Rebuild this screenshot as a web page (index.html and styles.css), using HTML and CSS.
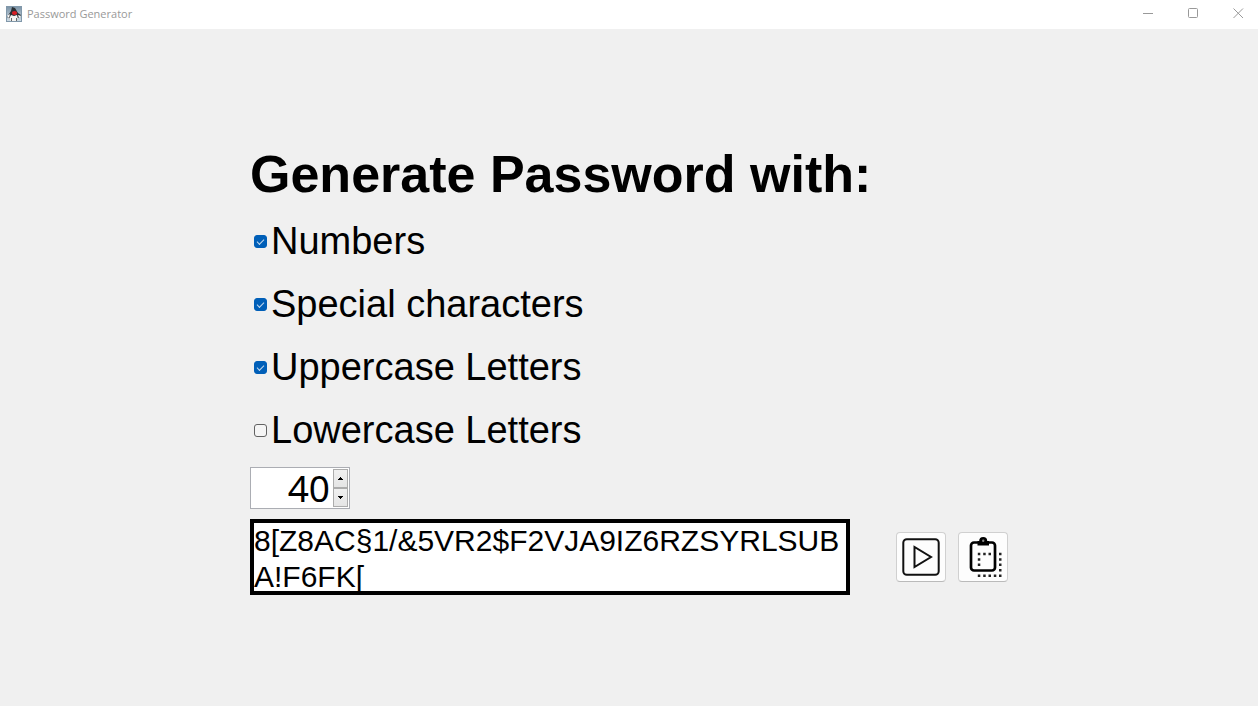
FILE: index.html
```html
<!DOCTYPE html>
<html lang="en">
<head>
<meta charset="utf-8">
<title>Password Generator</title>
<link rel="stylesheet" href="styles.css">
</head>
<body>
<header class="titlebar">
  <svg class="app-icon" width="16" height="16" viewBox="0 0 16 16" aria-hidden="true">
    <defs><linearGradient id="sky" x1="0" y1="0" x2="0" y2="1"><stop offset="0" stop-color="#7890a4"/><stop offset="1" stop-color="#d3dfe8"/></linearGradient></defs>
    <rect width="16" height="16" fill="url(#sky)"/>
    <rect x=".5" y=".5" width="15" height="15" fill="none" stroke="#8198aa"/>
    <path d="M6 1l3 1 3 5 3 2-1 2-2 1-1 2H4l-1-2-2-1 2-3 2-3z" fill="#2b3034"/>
    <path d="M5 9l3 1 3-1 1 4-2 2H5l-2-2z" fill="#f4f4f2"/>
    <path d="M1 10l3-2-1 4zM12 9l3 1-2 2z" fill="#fff"/>
    <ellipse cx="8.500" cy="7" rx="2.600" ry="1.900" fill="#d81e24"/>
    <path d="M5 12h1v3H5zM10 12h1v3h-1z" fill="#666"/>
  </svg>
  <span class="title">Password Generator</span>
  <div class="window-buttons">
    <button type="button" class="window-button" aria-label="Minimize"><svg width="11" height="11" viewBox="0 0 11 11"><path d="M0 5.5h10"/></svg></button>
    <button type="button" class="window-button" aria-label="Maximize"><svg width="11" height="11" viewBox="0 0 11 11"><rect x=".5" y=".5" width="9" height="9" rx="1"/></svg></button>
    <button type="button" class="window-button" aria-label="Close"><svg width="11" height="11" viewBox="0 0 11 11"><path d="M.5 .5l9.500 9.500M10 .5l-9.500 9.500"/></svg></button>
  </div>
</header>
<main class="content">
  <form class="generator">
    <h1 class="heading">Generate Password with:</h1>
    <div class="options">
      <label class="option"><input class="check" type="checkbox" checked>Numbers</label>
      <label class="option"><input class="check" type="checkbox" checked>Special characters</label>
      <label class="option"><input class="check" type="checkbox" checked>Uppercase Letters</label>
      <label class="option"><input class="check" type="checkbox">Lowercase Letters</label>
    </div>
    <div class="spinner">
      <input class="length" type="text" inputmode="numeric" value="40" aria-label="Password length">
      <div class="steps">
        <button type="button" class="step" aria-label="Increase"><svg width="5" height="3" viewBox="0 0 5 3" shape-rendering="crispEdges"><path d="M2 0h1v1h1v1h1v1H0V2h1V1h1z"/></svg></button>
        <button type="button" class="step" aria-label="Decrease"><svg width="5" height="3" viewBox="0 0 5 3" shape-rendering="crispEdges"><path d="M0 0h5v1H4v1H3v1H2V2H1V1H0z"/></svg></button>
      </div>
    </div>
    <div class="result">
      <textarea class="password" aria-label="Generated password" readonly spellcheck="false">8[Z8AC§1/&amp;5VR2$F2VJA9IZ6RZSYRLSUBA!F6FK[</textarea>
      <div class="actions">
        <button type="button" class="action" aria-label="Generate"><svg width="38" height="38" viewBox="0 0 38 38" fill="none" stroke="#111" stroke-width="2"><rect x="1.300" y="1.300" width="35.400" height="35.400" rx="3.500"/><path d="M12.500 9v20l16.500-10z"/></svg></button>
        <button type="button" class="action" aria-label="Copy"><svg width="38" height="42" viewBox="0 0 38 42">
          <rect x="7" y="6.500" width="24" height="28" rx="3" fill="none" stroke="#000" stroke-width="2.700"/>
          <path d="M13.500 5h11.500v4.500H13.500z" fill="#000"/>
          <circle cx="19.200" cy="5" r="4" fill="#000"/><circle cx="19.200" cy="4.800" r="1.200" fill="#888"/>
          <path d="M13.800 18h2.500M19.200 18h2.500M24.500 18h2.500M13.800 23.400h2.500M13.800 28.800h2.500M35 18h2.500M35 23.400h2.500M35 28.800h2.500M35 34.200h2.500M13.800 39.700h2.500M19.200 39.700h2.500M24.500 39.700h2.500M29.800 39.700h2.500M35 39.700h2.500" fill="none" stroke="#222" stroke-width="2.500"/>
        </svg></button>
      </div>
    </div>
  </form>
</main>
</body>
</html>
```
FILE: styles.css
```css
* { box-sizing: border-box; }

body {
  margin: 0;
  min-height: 100vh;
  display: flex;
  flex-direction: column;
  background: #f0f0f0;
  color: #000;
  font-family: "Liberation Sans", Arial, sans-serif;
  font-kerning: none;
}

button { padding: 0; font: inherit; }

.titlebar {
  display: flex;
  align-items: center;
  height: 29px;
  padding: 0 0 2px 6px;
  background: #fff;
}

.title {
  margin-left: 5px;
  flex: 1;
  color: #999;
  font: 11px/16px "Open Sans", sans-serif;
}

.window-buttons { display: flex; }

.window-button {
  display: flex;
  align-items: center;
  justify-content: center;
  width: 46px;
  height: 26px;
  margin-right: -1px;
  border: 0;
  background: none;
}

.window-button:last-child { margin-right: -3px; }

.window-button svg { fill: none; stroke: #999; }

.content {
  flex: 1;
  display: flex;
  align-items: center;
  justify-content: center;
  padding-top: 4px;
}

.generator {
  display: flex;
  flex-direction: column;
  align-items: flex-start;
}

.heading {
  margin: 0 0 16px;
  font-size: 52px;
  line-height: 60px;
}

.options {
  display: flex;
  flex-direction: column;
  gap: 20px;
  margin-bottom: 15px;
}

.option {
  display: flex;
  align-items: center;
  gap: 4px;
  padding-left: 4px;
  font-size: 38px;
  line-height: 43px;
}

.check {
  appearance: none;
  width: 13px;
  height: 13px;
  margin: 0;
  border: 1px solid #626262;
  border-radius: 3px;
  background: #f5f5f5;
}

.check:checked {
  display: grid;
  place-items: center;
  border-color: #005fb8;
  background: #005fb8;
}

.check:checked::after {
  content: "";
  width: 6px;
  height: 3px;
  margin-bottom: 2px;
  border: solid #c4daee;
  border-width: 0 0 1px 1px;
  transform: rotate(-45deg);
}

.spinner {
  display: flex;
  width: 100px;
  height: 42px;
  margin-bottom: 10px;
  padding: 1px;
  border: 1px solid #abadb3;
  background: #fff;
}

.length {
  flex: 1;
  min-width: 0;
  padding: 0 3px 0 0;
  border: 0;
  background: none;
  color: #000;
  font: 37px/38px "Noto Sans", sans-serif;
  text-align: right;
}

.steps {
  display: flex;
  flex-direction: column;
  width: 15px;
}

.step {
  flex: 1;
  display: flex;
  align-items: center;
  justify-content: center;
  border: 1px solid #acacac;
  background: linear-gradient(#f0f0f0, #e5e5e5);
}

.result {
  display: flex;
  align-items: center;
  gap: 46px;
}

.password {
  display: block;
  width: 600px;
  height: 76px;
  padding: 0;
  border: 4px solid #000;
  border-radius: 0;
  outline: 0;
  overflow: hidden;
  resize: none;
  background: #fff;
  color: #000;
  font: 30px/36px "Liberation Sans", Arial, sans-serif;
  font-kerning: none;
  word-break: break-all;
}

.actions { display: flex; gap: 12px; }

.action {
  display: flex;
  align-items: center;
  justify-content: center;
  width: 50px;
  height: 50px;
  border: 1px solid #d0d0d0;
  border-bottom-color: #bababa;
  border-radius: 4px;
  background: #fdfdfd;
}
```
